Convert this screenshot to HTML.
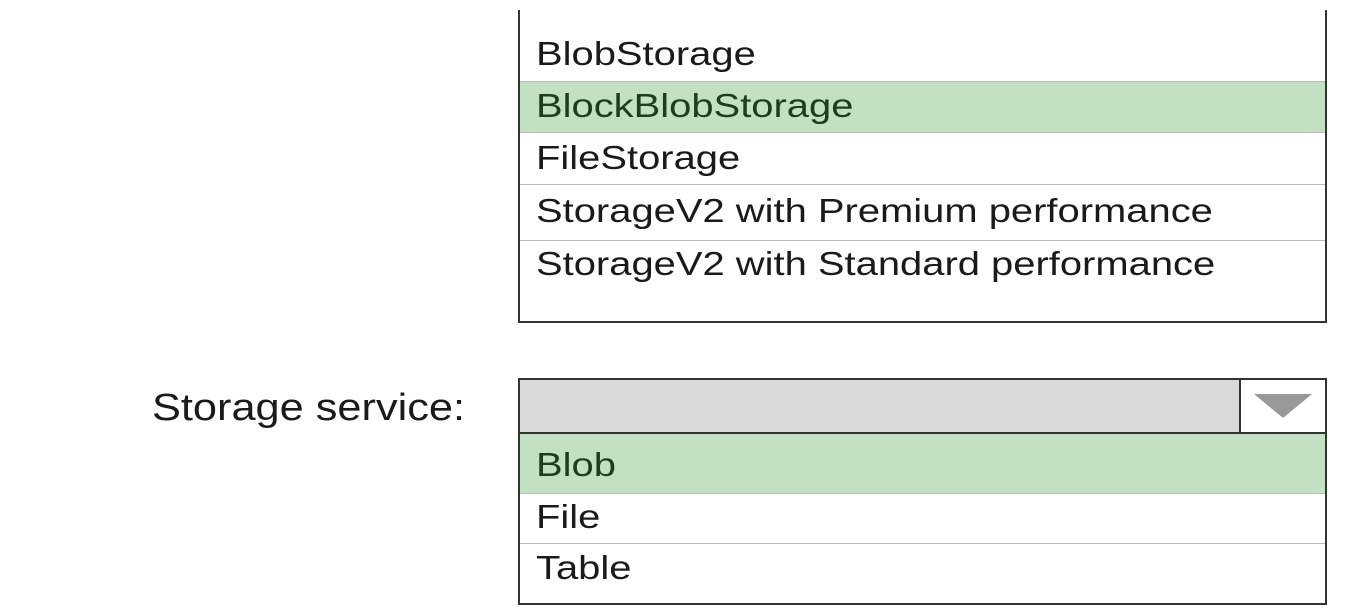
<!DOCTYPE html>
<html><head><style>
body{margin:0;width:1347px;height:615px;background:#fff;position:relative;overflow:hidden;font-family:"Liberation Sans",sans-serif;color:#1a1a1a}
.a{position:absolute;box-sizing:border-box}
.t{position:absolute;font-size:33px;white-space:nowrap;line-height:1;transform-origin:left center;transform:scaleX(1.21)}
.sep{position:absolute;height:1px;background:#bbb;left:520px;width:805px}
</style></head><body>
<div class="a" style="left:518px;top:10px;width:809px;height:313px;border:2px solid #333;border-top:none"></div>
<div class="a" style="left:520px;top:82px;width:805px;height:50px;background:#c3e0c3"></div>
<div class="sep" style="top:81px"></div>
<div class="sep" style="top:132px"></div>
<div class="sep" style="top:184px"></div>
<div class="sep" style="top:240px"></div>
<div class="t" style="left:536px;top:37px">BlobStorage</div>
<div class="t" style="left:536px;top:89px;color:#1e3d1e">BlockBlobStorage</div>
<div class="t" style="left:536px;top:141px">FileStorage</div>
<div class="t" style="left:536px;top:194px">StorageV2 with Premium performance</div>
<div class="t" style="left:536px;top:247px">StorageV2 with Standard performance</div>

<div class="t" style="left:152px;top:389px;font-size:38px;transform:scaleX(1.14)">Storage service:</div>

<div class="a" style="left:518px;top:378px;width:809px;height:227px;border:2px solid #333"></div>
<div class="a" style="left:520px;top:380px;width:720px;height:53px;background:#d9d9d9"></div>
<div class="a" style="left:1239px;top:380px;width:2px;height:53px;background:#333"></div>
<div class="a" style="left:520px;top:432px;width:805px;height:2px;background:#333"></div>
<svg class="a" style="left:1252px;top:390px" width="62" height="32"><polygon points="2,4 60,4 31,28" fill="#999"/></svg>
<div class="a" style="left:520px;top:434px;width:805px;height:59px;background:#c3e0c3"></div>
<div class="sep" style="top:493px"></div>
<div class="sep" style="top:543px"></div>
<div class="t" style="left:536px;top:448px;color:#1e3d1e">Blob</div>
<div class="t" style="left:536px;top:500px">File</div>
<div class="t" style="left:536px;top:551px">Table</div>
</body></html>
